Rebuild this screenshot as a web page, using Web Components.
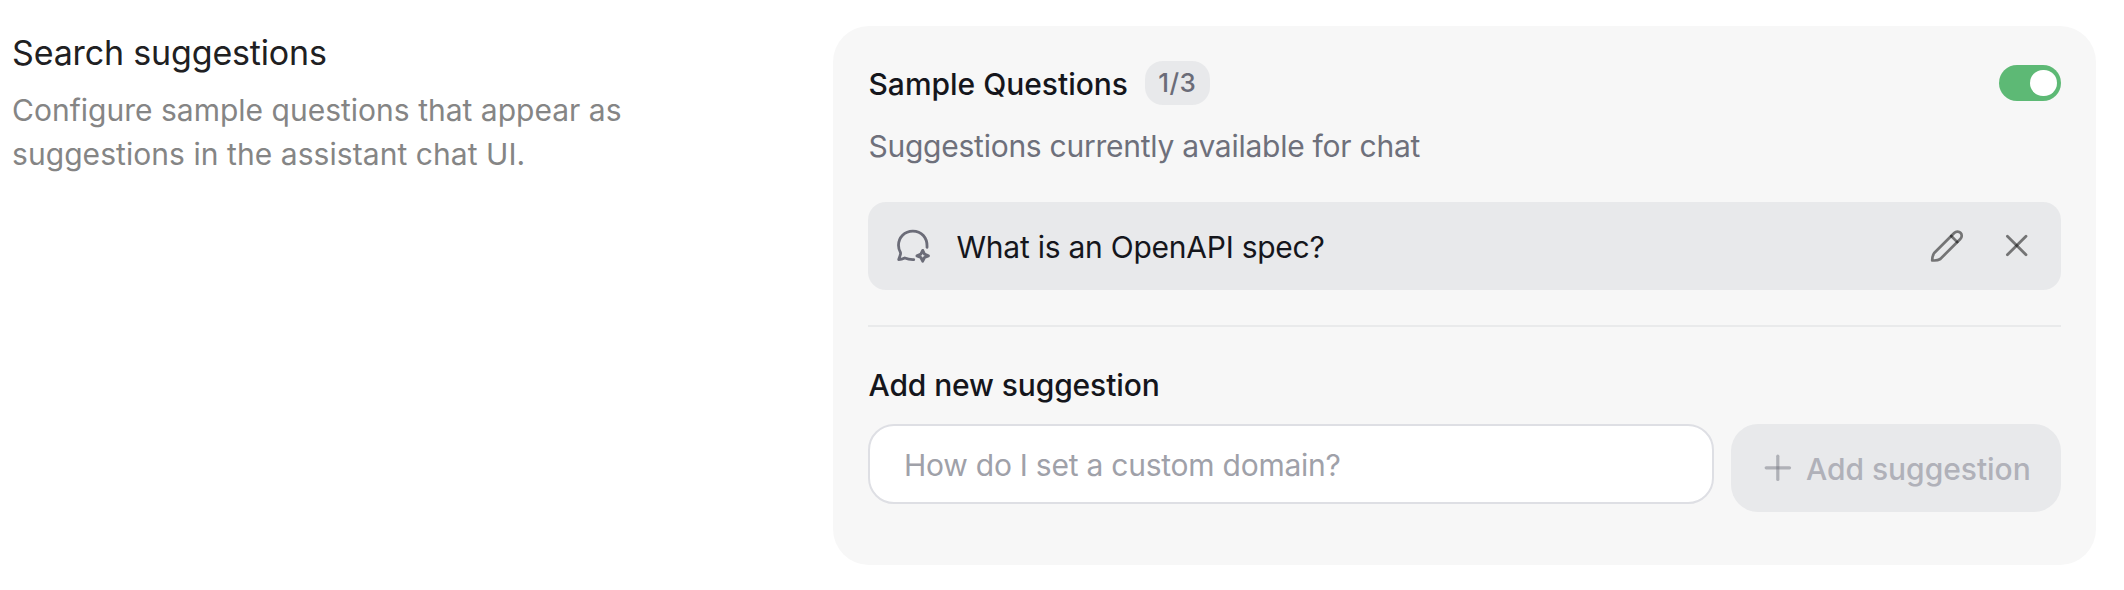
<!DOCTYPE html>
<html lang="en">
<head>
<meta charset="utf-8">
<title>Search suggestions</title>
<style>
  body { margin: 0; background: #fff; font-family: Inter, "Liberation Sans", sans-serif; font-size: 30px; line-height: 44px; }
</style>
</head>
<body>
<settings-section>
  <section-intro slot="intro">
    <span slot="title">Search suggestions</span>
    <span>Configure sample questions that appear as<br><span style="letter-spacing:.06px">suggestions in the assistant chat UI.</span></span>
  </section-intro>
  <settings-card>
    <card-header count="1/3">Sample Questions<toggle-switch slot="action"></toggle-switch></card-header>
    <card-note>Suggestions currently available for chat</card-note>
    <question-row>What is an OpenAPI spec?</question-row>
    <suggestion-form>
      <span slot="label">Add new suggestion</span>
      <text-field>How do I set a custom domain?</text-field>
      <add-button slot="action">Add suggestion</add-button>
    </suggestion-form>
  </settings-card>
</settings-section>
<script>
const define = (name, html) => customElements.define(name, class extends HTMLElement {
  constructor() {
    super();
    this.attachShadow({ mode: 'open' }).innerHTML = '<style>*{box-sizing:border-box}:host{box-sizing:border-box}svg{display:block;flex:none;fill:none;stroke-linecap:round;stroke-linejoin:round}</style>' + html;
    this.shadowRoot.querySelectorAll('[data-attr]').forEach(n => n.textContent = this.getAttribute(n.dataset.attr));
  }
});

define('settings-section', `
<style>:host{display:grid;grid-template-columns:821px 1263px;padding:26px 28px 25px 12px;align-items:start}</style>
<slot name="intro"></slot><slot></slot>`);

define('section-intro', `
<style>
:host{display:block;padding-top:5px;white-space:nowrap}
h2{margin:0 0 13px;font-size:34px;font-weight:400;letter-spacing:-.16px;color:#202022}
p{margin:0;color:#858585;letter-spacing:.01px}
</style>
<h2><slot name="title"></slot></h2><p><slot></slot></p>`);

define('settings-card', `
<style>:host{display:flex;flex-direction:column;height:539px;padding:35px;border-radius:36px;background:#f7f7f7}</style>
<slot></slot>`);

define('card-header', `
<style>
:host{display:flex;align-items:flex-start;height:44px}
b{font-weight:500;line-height:46px;color:#15161c;letter-spacing:-.02px;padding-left:.5px}
.count{margin-left:16.8px;width:65px;height:44px;border-radius:18px;background:#e8e9eb;color:#6b6c78;font-size:26px;font-weight:500;line-height:43px;text-align:center;letter-spacing:.4px}
.action{margin-left:auto;padding-top:4px}
</style>
<b><slot></slot></b><span class="count" data-attr="count"></span><div class="action"><slot name="action"></slot></div>`);

define('toggle-switch', `
<style>
:host{display:flex;align-items:center;justify-content:flex-end;width:62px;height:36px;padding-right:4.5px;border-radius:18px;background:#5db975}
i{width:26.5px;height:26.5px;border-radius:50%;background:#fff}
</style><i></i>`);

define('card-note', `
<style>:host{display:block;margin-top:19px;padding-left:.5px;color:#6e707b;letter-spacing:-.255px}</style><slot></slot>`);

define('question-row', `
<style>
:host{display:flex;align-items:center;height:88px;margin-top:34px;padding:0 32px 0 28px;border-radius:18px;background:#e8e9eb;color:#15161c}
span{flex:1;padding:2px 0 0 24.5px;letter-spacing:-.246px}
.x{margin-left:40px}
</style>
<svg width="36" height="36" stroke="#6b6c78" stroke-width="2.8">
  <path d="M31 19.3C31.6 9.6 25.3 3.1 16.8 3.1C8.6 3.1 2.5 9.4 2.5 17.3C2.5 20 3.2 22.3 4.4 24.3C5.4 26.2 3 29.5 2.7 31.6C5 31.6 7.2 30.8 8.8 30C11.5 31.2 14.8 31.7 17.7 31.6"/>
  <path d="M26.7 22.4L28.5 26.1L32.4 27.8L28.5 29.5L26.7 33.2L24.9 29.5L21 27.8L24.9 26.1Z" stroke-width="2.9"/>
</svg>
<span><slot></slot></span>
<svg width="36" height="36" stroke="#000" stroke-opacity=".5" stroke-width="2.7">
  <path d="M3.2 32.4C3.2 29.8 3.8 27 5.2 25L25.2 5C27 3.2 29.9 3.1 31.5 4.8C33.2 6.5 33.1 9.2 31.3 11L11.3 31C9.2 32.3 6 32.7 3.2 32.4Z"/>
  <path d="M22.2 8L28.3 14.1"/>
</svg>
<svg class="x" width="24" height="24" stroke="#000" stroke-opacity=".5" stroke-width="2.8">
  <path d="M2.4 2.2L21 20.8"/><path d="M21 2.2L2.4 20.8"/>
</svg>`);

define('suggestion-form', `
<style>
:host{display:block;margin-top:35px;border-top:2px solid #e9eaeb;padding-top:36px}
b{display:block;font-weight:500;color:#15161c;letter-spacing:-.12px;padding-left:.5px}
.row{display:flex;align-items:flex-start;gap:17px;margin-top:17px}
</style>
<b><slot name="label"></slot></b><div class="row"><slot></slot><slot name="action"></slot></div>`);

define('text-field', `
<style>:host{display:flex;align-items:center;flex:1;height:80px;padding:2px 34px 0;border:2px solid #dedfe4;border-radius:26px;background:#fff;color:#9fa1a9;letter-spacing:-.239px}</style><slot></slot>`);

define('add-button', `
<style>
:host{display:flex;align-items:center;width:330px;height:88px;padding-left:32px;border-radius:27px;background:#e8e9eb;color:#b0b1b9;font-weight:500;white-space:nowrap}
span{padding:2px 0 0 13px;letter-spacing:-.04px}
</style>
<svg width="30" height="30" stroke="#6b6c78" stroke-opacity=".45" stroke-width="3.2">
  <path d="M3.2 14.8H26.5"/><path d="M14.8 3.2V26.5"/>
</svg><span><slot></slot></span>`);
</script>
</body>
</html>
